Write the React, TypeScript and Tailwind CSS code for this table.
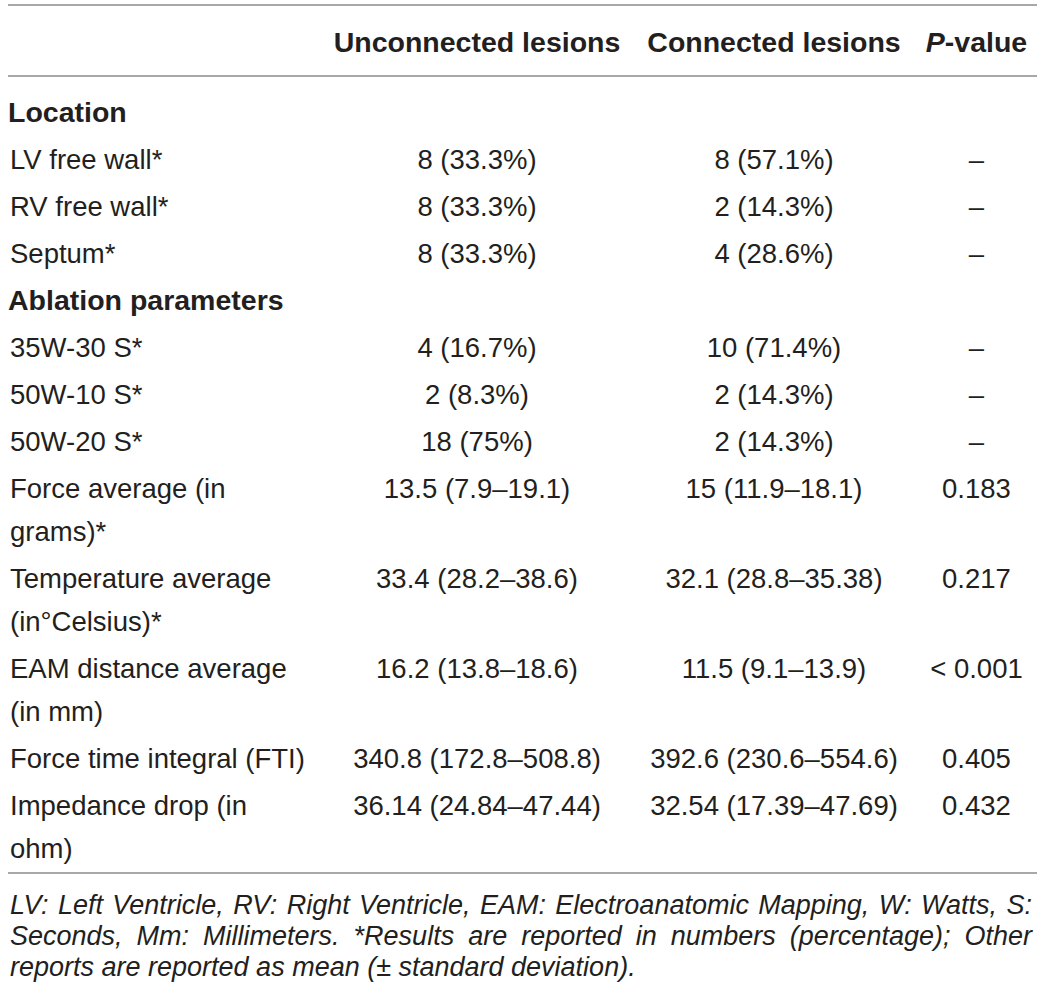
import type { ReactElement } from 'react';

type Row =
  | { kind: 'section'; label: string }
  | { kind: 'data'; label: string; unconnected: string; connected: string; p: string };

// Table rows, in reading order. Section rows span all four columns.
const ROWS: readonly Row[] = [
  { kind: 'section', label: 'Location' },
  { kind: 'data', label: 'LV free wall*', unconnected: '8 (33.3%)', connected: '8 (57.1%)', p: '–' },
  { kind: 'data', label: 'RV free wall*', unconnected: '8 (33.3%)', connected: '2 (14.3%)', p: '–' },
  { kind: 'data', label: 'Septum*', unconnected: '8 (33.3%)', connected: '4 (28.6%)', p: '–' },
  { kind: 'section', label: 'Ablation parameters' },
  { kind: 'data', label: '35W-30 S*', unconnected: '4 (16.7%)', connected: '10 (71.4%)', p: '–' },
  { kind: 'data', label: '50W-10 S*', unconnected: '2 (8.3%)', connected: '2 (14.3%)', p: '–' },
  { kind: 'data', label: '50W-20 S*', unconnected: '18 (75%)', connected: '2 (14.3%)', p: '–' },
  {
    kind: 'data',
    label: 'Force average (in grams)*',
    unconnected: '13.5 (7.9–19.1)',
    connected: '15 (11.9–18.1)',
    p: '0.183',
  },
  {
    kind: 'data',
    label: 'Temperature average (in°Celsius)*',
    unconnected: '33.4 (28.2–38.6)',
    connected: '32.1 (28.8–35.38)',
    p: '0.217',
  },
  {
    kind: 'data',
    label: 'EAM distance average (in mm)',
    unconnected: '16.2 (13.8–18.6)',
    connected: '11.5 (9.1–13.9)',
    p: '< 0.001',
  },
  {
    kind: 'data',
    label: 'Force time integral (FTI)',
    unconnected: '340.8 (172.8–508.8)',
    connected: '392.6 (230.6–554.6)',
    p: '0.405',
  },
  {
    kind: 'data',
    label: 'Impedance drop (in ohm)',
    unconnected: '36.14 (24.84–47.44)',
    connected: '32.54 (17.39–47.69)',
    p: '0.432',
  },
];

const FONT = "font-['Liberation_Sans',Arial,Helvetica,sans-serif]";

export default function App(): ReactElement {
  return (
    <div className={`min-h-[997px] w-[1045px] bg-white pt-[4px] text-[#231f20] ${FONT}`}>
      <table className="ml-[8px] w-[1029px] table-fixed border-t-2 border-b-2 border-[#a8a8a8]">
        <colgroup>
          <col className="w-[314px]" />
          <col className="w-[310px]" />
          <col className="w-[284px]" />
          <col className="w-[121px]" />
        </colgroup>
        <thead>
          <tr className="border-b-2 border-[#a8a8a8] text-[28.5px] font-bold leading-[44px]">
            <th className="pt-[14px] pb-[11px]" />
            <th className="pt-[14px] pb-[11px] text-center whitespace-nowrap">Unconnected lesions</th>
            <th className="pt-[14px] pb-[11px] text-center whitespace-nowrap">Connected lesions</th>
            <th className="pt-[14px] pb-[11px] text-center whitespace-nowrap">
              <span className="italic">P</span>-value
            </th>
          </tr>
        </thead>
        <tbody>
          {ROWS.map((row, i) =>
            row.kind === 'section' ? (
              <tr key={row.label}>
                <td
                  colSpan={4}
                  className={`pb-[2px] text-[28.5px] font-bold leading-[43px] ${
                    i === 0 ? 'pt-[14px]' : 'pt-[2px]'
                  }`}
                >
                  {row.label}
                </td>
              </tr>
            ) : (
              <tr key={row.label} className="align-top text-[27.5px] leading-[43px]">
                <td className="py-[2px] pl-[2px] pr-[12px]">{row.label}</td>
                <td className="py-[2px] text-center whitespace-nowrap">{row.unconnected}</td>
                <td className="py-[2px] text-center whitespace-nowrap">{row.connected}</td>
                <td className="py-[2px] text-center whitespace-nowrap">{row.p}</td>
              </tr>
            ),
          )}
        </tbody>
      </table>
      <p className="ml-[10px] w-[1022px] pt-[16px] text-justify text-[27px] italic leading-[31px]">
        LV: Left Ventricle, RV: Right Ventricle, EAM: Electroanatomic Mapping, W: Watts, S: Seconds,
        Mm: Millimeters. *Results are reported in numbers (percentage); Other reports are reported as
        mean (± standard deviation).
      </p>
    </div>
  );
}
